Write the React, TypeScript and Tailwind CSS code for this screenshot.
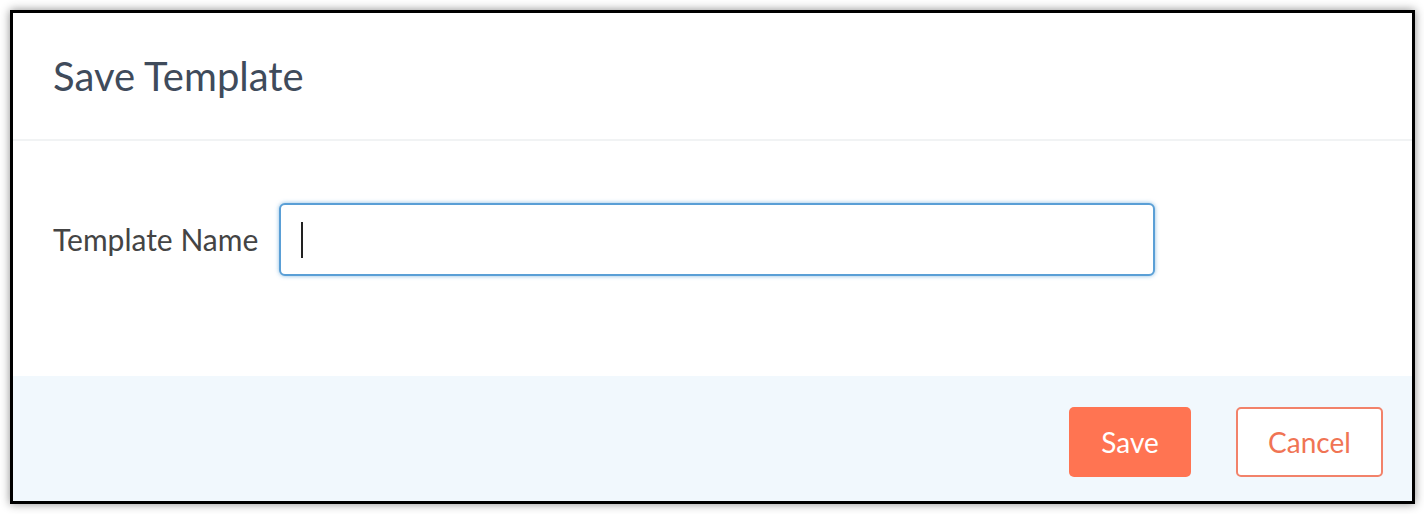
export default function App() {
  return (
    <div className="w-[1424px] h-[514px] bg-white p-[10px] font-['Lato',sans-serif]">
      <div className="flex h-[494px] w-[1405px] flex-col border-[3px] border-black bg-white shadow-[0_0_9px_rgba(0,0,0,0.45)]">
        <div className="flex h-[128px] items-center border-b-2 border-[#f1f3f4] px-[40px]">
          <h1 className="text-[40px] text-[#3f4b5b]">Save Template</h1>
        </div>
        <div className="flex h-[235px] items-start px-[40px] pt-[62px]">
          <div className="flex items-center gap-[21px]">
            <label className="text-[30px] text-[#444]">Template Name</label>
            <div className="flex h-[73px] w-[876px] items-center rounded-[6px] border-2 border-[#5a9fd6] bg-white px-[20px] shadow-[0_0_4px_rgba(90,159,214,0.7)]">
              <span className="h-[36px] w-[2px] bg-[#222]" />
            </div>
          </div>
        </div>
        <div className="flex flex-1 items-start justify-end gap-[45px] bg-[#f1f8fd] pr-[29px] pt-[31px]">
          <button className="h-[70px] w-[122px] rounded-[5px] bg-[#ff7452] text-[28px] text-white">Save</button>
          <button className="h-[70px] w-[147px] rounded-[5px] border-2 border-[#f2826a] bg-white text-[28px] text-[#f07454]">Cancel</button>
        </div>
      </div>
    </div>
  );
}
